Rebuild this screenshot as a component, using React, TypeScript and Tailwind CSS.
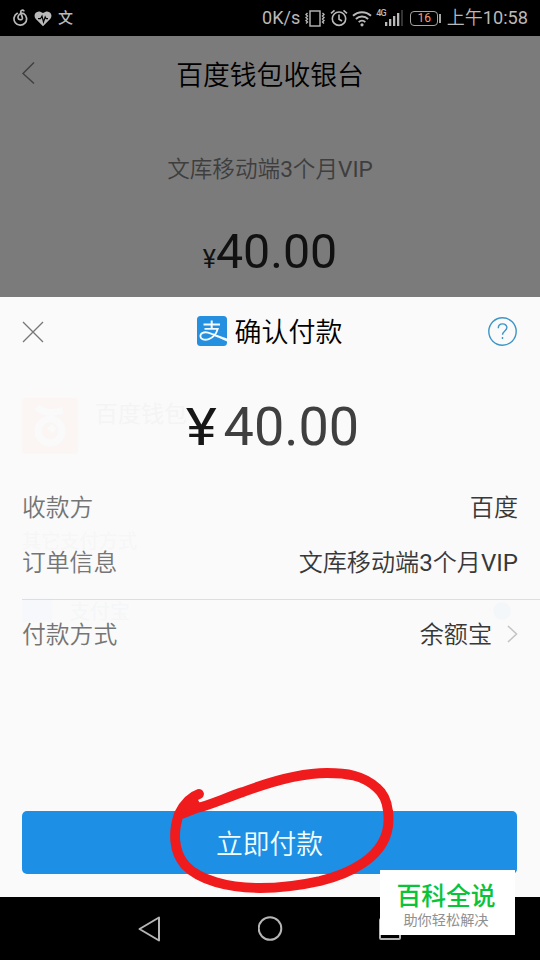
import type { ReactNode } from "react";

interface DetailRowProps {
  label: string;
  value: ReactNode;
  className: string;
  children?: ReactNode;
}

function StatusBar() {
  return (
    <header className="h-9 bg-black text-[#b9b9b9] flex items-center pl-[13px] pr-3 whitespace-nowrap">
      <svg width="15" height="18" viewBox="0 0 15 18" fill="none" stroke="currentColor" strokeWidth="1.7" strokeLinecap="round">
        <path d="M4.3 4.3A6.3 6.3 0 1 0 10.8 4.6C7.2 3.7 4.8 6.1 5 8.7c.2 2.3 3.7 2.8 4.4.7C9.8 8 7.4 4.3 7.7 2.7 7.9 1.3 9.8.7 10.8 1.8" />
      </svg>
      <svg className="ml-[6px]" width="18" height="17" viewBox="0 0 18 17">
        <path fill="currentColor" d="M9 16.2 1.6 8.7C-1.6 5 2.9-1.7 9 3.1c6.1-4.8 10.6 1.9 7.4 5.6z" />
        <path fill="none" stroke="#000" strokeWidth="1.2" d="M4 8.7h2.5L8 6l1.5 6 1.7-5 1 1.7H14" />
      </svg>
      <span className="ml-[6px] pt-px text-[15px] leading-none font-medium">文</span>
      <span className="ml-auto text-[18px] leading-none font-normal">0K/s</span>
      <svg className="ml-[4px]" width="22" height="17" viewBox="0 0 22 17" fill="none" stroke="currentColor" strokeWidth="1.4">
        <rect x="6" y="1" width="10" height="15" />
        <path d="M3.5 3 2 4.500 3.5 6 2 7.500 3.5 9 2 10.500 3.5 12 2 13.500M18.500 3 20 4.500 18.500 6 20 7.500 18.500 9 20 10.500 18.500 12 20 13.500" />
      </svg>
      <svg className="ml-[4px]" width="18" height="18" viewBox="0 0 18 18" fill="none" stroke="currentColor" strokeWidth="1.6">
        <circle cx="9" cy="9.7" r="6.7" />
        <path d="M9 5.5v4.7l3 1.8M1 4.3 4.5 1.4M17 4.3l-3.5-2.9" />
      </svg>
      <svg className="ml-[4px]" width="20" height="17" viewBox="0 0 20 17" fill="none" stroke="currentColor" strokeWidth="1.9">
        <path d="M1 5.8a13 13 0 0 1 18 0M3.9 9a8.8 8.8 0 0 1 12.2 0M6.700 12.1a4.8 4.8 0 0 1 6.6 0" />
        <circle cx="10" cy="14.8" r="1.6" fill="currentColor" stroke="none" />
      </svg>
      <span className="ml-[4px] text-[9px] leading-none self-start mt-[9px] w-[10px] tracking-[-0.8px] font-medium">4G</span>
      <svg className="-ml-px" width="18" height="17" viewBox="0 0 18 17" fill="currentColor">
        <path d="M0 12h2.3v4H0zM4 9h2.3v7H4zM8 6h2.3v10H8zM12 3h2.3v13H12z" />
        <path fill="#333" d="M16 0h2v16h-2z" />
      </svg>
      <div className="ml-[7px] w-7 h-[15px] rounded border border-[#a5a5a5] flex items-center justify-center text-[12px] leading-none font-normal text-[#ee9e79]">16</div>
      <div className="ml-px w-[1.5px] h-[9px] bg-[#a5a5a5]" />
      <span className="ml-[6px] pt-px text-[18px] leading-none">上午<span className="font-normal text-[18.2px]">10:58</span></span>
    </header>
  );
}

function DetailRow({ label, value, className, children }: DetailRowProps) {
  return (
    <div className={`flex items-center leading-none px-[22px] ${className}`}>
      <span className="text-[23.8px] leading-none text-[#757575]">{label}</span>
      <span className="ml-auto text-[24.1px] leading-none text-[#383838]">{value}</span>
      {children}
    </div>
  );
}

function Cashier() {
  return (
    <section className="h-[261px] bg-[#7b7b7b] flex flex-col">
      <div className="h-[77px] pt-[4px] relative flex items-center justify-center text-[26.8px] leading-none text-black">
        <svg className="absolute left-[22px] top-[25px]" width="13" height="24" viewBox="0 0 13 24" fill="none" stroke="#404040" strokeWidth="1.5">
          <path d="M12 1.5 1 12.5l11 10" />
        </svg>
        百度钱包收银台
      </div>
      <div className="h-[114px] flex items-center justify-center text-[22.6px] leading-none text-[#3e3e3e]">
        <span>文库移动端<span className="font-normal">3</span>个月<span className="font-normal">VIP</span></span>
      </div>
      <div className="flex items-baseline justify-center leading-none text-[#111] font-normal pt-px">
        <span className="text-[25px] leading-none">¥</span>
        <span className="text-[48.3px] leading-none">40.00</span>
      </div>
    </section>
  );
}

// Leftovers of the wallet page that still show faintly through the sheet
function FadedBackdrop() {
  return (
    <div className="absolute inset-x-0 top-[101px] pl-[22px] pointer-events-none leading-none">
      <div className="flex">
        <div className="w-14 h-14 rounded bg-[#fbf5f4] flex items-center justify-center">
          <svg width="40" height="46" viewBox="0 0 40 46" fill="none" stroke="#fafafa" strokeWidth="7">
            <circle cx="20" cy="28" r="12" />
            <path d="M7 4q9 9 26 3M20 28l4-5" />
          </svg>
        </div>
        <span className="ml-[17px] mt-[5px] text-[23px] leading-none text-[#f4f4f4]">百度钱包</span>
      </div>
      <div className="mt-[78px] text-[19.2px] leading-none text-[#f6f6f6]">其它支付方式</div>
      <div className="mt-[47px] flex text-[20px] leading-none text-[#f5f6f7]">
        <div className="w-[30px] h-6 bg-[#f6f8fb]" />
        <span className="ml-[18px] mt-1">支付宝</span>
        <div className="ml-auto mr-[29px] mt-1 w-[18px] h-[18px] rounded-full bg-[#f4f7fa]" />
      </div>
    </div>
  );
}

function PaymentSheet() {
  return (
    <section className="relative h-[600px] bg-[#fafafa]">
      <FadedBackdrop />
      <div className="relative">
        <div className="h-[69px] pl-[22px] pr-[23px] flex items-center justify-between">
          <svg width="22" height="22" viewBox="0 0 22 22" stroke="#777" strokeWidth="1.3">
            <path d="m1 1 20 20M21 1 1 21" />
          </svg>
          <div className="flex items-center text-[27px] leading-none text-black ml-[7px] -mt-px">
            <svg className="mr-2" width="30" height="30" viewBox="0 0 30 30" fill="none">
              <rect width="30" height="30" rx="3.5" fill="#258fe0" />
              <path stroke="#f4fcff" strokeWidth="2" d="M6.500 8.500h16.500M14.700 4.500v8" />
              <path stroke="#f4fcff" strokeWidth="1.8" d="M7.500 12.800h13.300c-1.300 4.500-4.500 8.700-9 10.300-4.400 1.500-8.200.2-8.400-2.800-.2-3.200 3.600-4.700 7.600-3.700 3.500.9 6 2.300 10 4" />
              <path fill="#f4fcff" d="m16 17.400 14 5v3.200l-14-6.400z" />
            </svg>
            <span className="pt-[4px]">确认付款</span>
          </div>
          <svg className="-mt-px" width="29" height="29" viewBox="0 0 29 29" fill="none" stroke="#3d96c6" strokeWidth="1.4">
            <circle cx="14.5" cy="14.5" r="13.7" />
            <path d="M10.3 11.2c0-5.700 8.6-5.500 8.6-.6 0 3.3-4.400 3.4-4.400 7.2M14.500 20v2" />
          </svg>
        </div>
        <div className="h-[121px] flex items-baseline justify-center pt-[34px] pl-[7px] leading-none font-normal">
          <span className="inline-block scale-x-[1.16] text-[51px] leading-none text-[#171717]">¥</span>
          <span className="text-[54px] leading-none text-[#3f3f3f] ml-[9px]">40.00</span>
        </div>
        <DetailRow label="收款方" value="百度" className="h-[40px] pt-[3px]" />
        <DetailRow
          label="订单信息"
          value={<>文库移动端<span className="font-normal">3</span>个月<span className="font-normal">VIP</span></>}
          className="h-[70px] pt-[3px]"
        />
        <div className="mt-[2px] ml-[22px] h-px bg-[#dedede]" />
        <DetailRow label="付款方式" value="余额宝" className="h-[68px] pt-[3px]">
          <svg className="ml-[15px] -mt-[4px]" width="11" height="18" viewBox="0 0 11 18" fill="none" stroke="#c4c4c4" strokeWidth="1.6">
            <path d="m1 1 8.5 8L1 17" />
          </svg>
        </DetailRow>
        <button className="mt-[143px] mx-[22px] w-[495px] h-[63px] rounded-[5px] bg-[#1d8fe5] text-[#f1ffff] text-[26.8px] leading-none flex items-center justify-center pt-[5px]">立即付款</button>
      </div>
      <svg className="absolute left-[160px] top-[460px] pointer-events-none" width="240" height="140" viewBox="160 757 240 140" fill="none" stroke="#ef1b1d" strokeWidth="9.8" strokeLinecap="round" strokeLinejoin="round">
        <path d="M199 794C190 797 183 806 179 814C173 831 173 851 185 865C199 880 228 888 260 888C281 888 302 885 320 881C336 877 350 872 363 863C382 850 391 833 388 811C387 802 383 793 377 788C363 775 346 773 327 773C300 773 267 783 243 792C225 798 208 806 197 808L179 815" />
        <path strokeWidth="8" d="M181 811 194 801 197 806z" fill="#ef1b1d" />
      </svg>
    </section>
  );
}

export default function App() {
  return (
    <main className="relative w-[540px] h-[960px] overflow-hidden bg-black font-[350] font-['Roboto','Noto_Sans_CJK_SC',sans-serif]">
      <StatusBar />
      <Cashier />
      <PaymentSheet />
      <nav className="h-[63px] flex items-center justify-between pl-[138px] pr-[139px]">
        <svg width="23" height="26" viewBox="0 0 23 26" fill="none" stroke="#b5b5b5" strokeWidth="2" strokeLinejoin="round">
          <path d="M21 1.500v23L1.500 13z" />
        </svg>
        <svg width="25" height="25" viewBox="0 0 25 25" fill="none" stroke="#b5b5b5" strokeWidth="2">
          <circle cx="12" cy="12.5" r="11.3" />
        </svg>
        <div className="w-[22px] h-[22px] border-2 border-[#b5b5b5] rounded-xs" />
      </nav>
      <aside className="absolute left-[380px] top-[870px] w-[135px] h-[65px] bg-white flex flex-col items-center leading-none">
        <strong className="mt-[15px] -ml-[3px] text-[24.8px] leading-none font-medium text-[#09c43a]">百科全说</strong>
        <span className="mt-[3px] -ml-[3px] text-[14.2px] leading-none font-normal text-[#909090]">助你轻松解决</span>
      </aside>
    </main>
  );
}
